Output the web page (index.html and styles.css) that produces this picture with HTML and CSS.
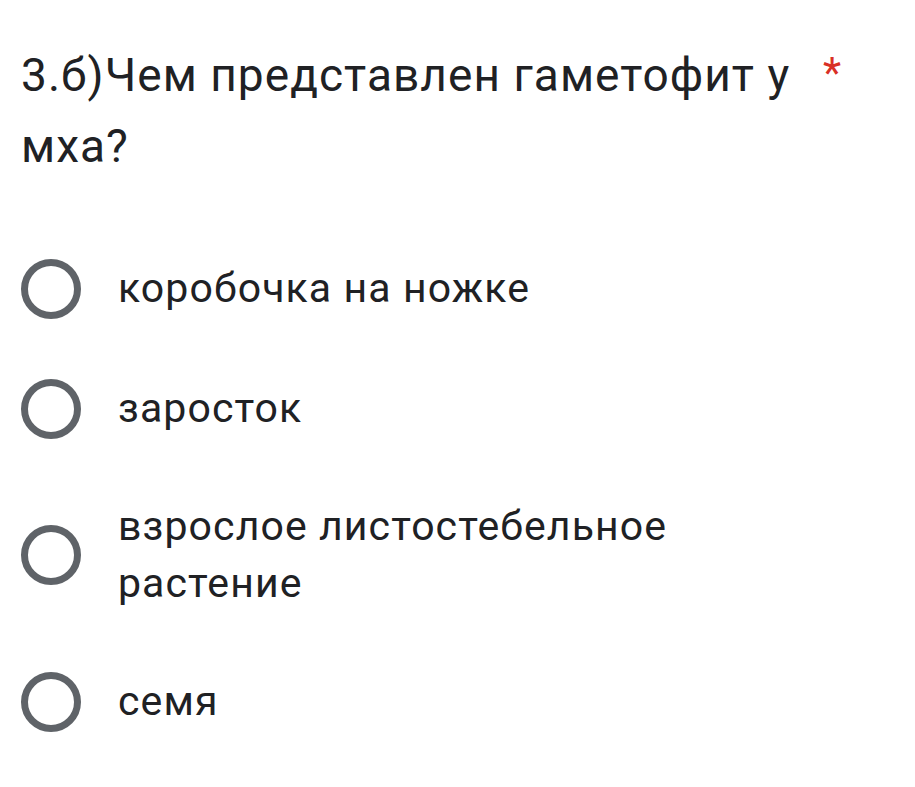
FILE: index.html
```html
<!DOCTYPE html>
<html lang="ru">
<head>
<meta charset="utf-8">
<title>Вопрос</title>
<link rel="stylesheet" href="styles.css">
</head>
<body>
<div class="question">
  <div class="q-head">
    <div class="q-title">3.б)Чем представлен гаметофит у мха?</div>
    <span class="q-required">*</span>
  </div>
  <div class="options">
    <label class="option"><span class="radio"></span><span class="opt-text">коробочка на ножке</span></label>
    <label class="option"><span class="radio"></span><span class="opt-text">заросток</span></label>
    <label class="option"><span class="radio"></span><span class="opt-text">взрослое листостебельное растение</span></label>
    <label class="option"><span class="radio"></span><span class="opt-text">семя</span></label>
  </div>
</div>
</body>
</html>
```
FILE: styles.css
```css
html, body {
  margin: 0;
  padding: 0;
  background: #ffffff;
}
body {
  font-family: Roboto, "Noto Sans", "Liberation Sans", sans-serif;
  color: #202124;
}
.question {
  padding: 40px 0 0 21px;
}
.q-head {
  display: flex;
  align-items: flex-start;
}
.q-title {
  width: 795px;
  font-size: 46px;
  line-height: 71px;
  letter-spacing: 1.05px;
}
.q-required {
  color: #d93025;
  font-size: 42px;
  line-height: 60px;
  margin-left: 7px;
  margin-top: 3px;
}
.options {
  margin-top: 76px;
  display: flex;
  flex-direction: column;
  gap: 59px;
}
.option {
  display: flex;
  align-items: center;
  gap: 37px;
  min-height: 61px;
}
.radio {
  flex: none;
  width: 46px;
  height: 46px;
  border: 7px solid #5f6368;
  border-radius: 50%;
}
.opt-text {
  width: 620px;
  font-size: 41px;
  line-height: 57px;
  letter-spacing: 1.1px;
}
```
